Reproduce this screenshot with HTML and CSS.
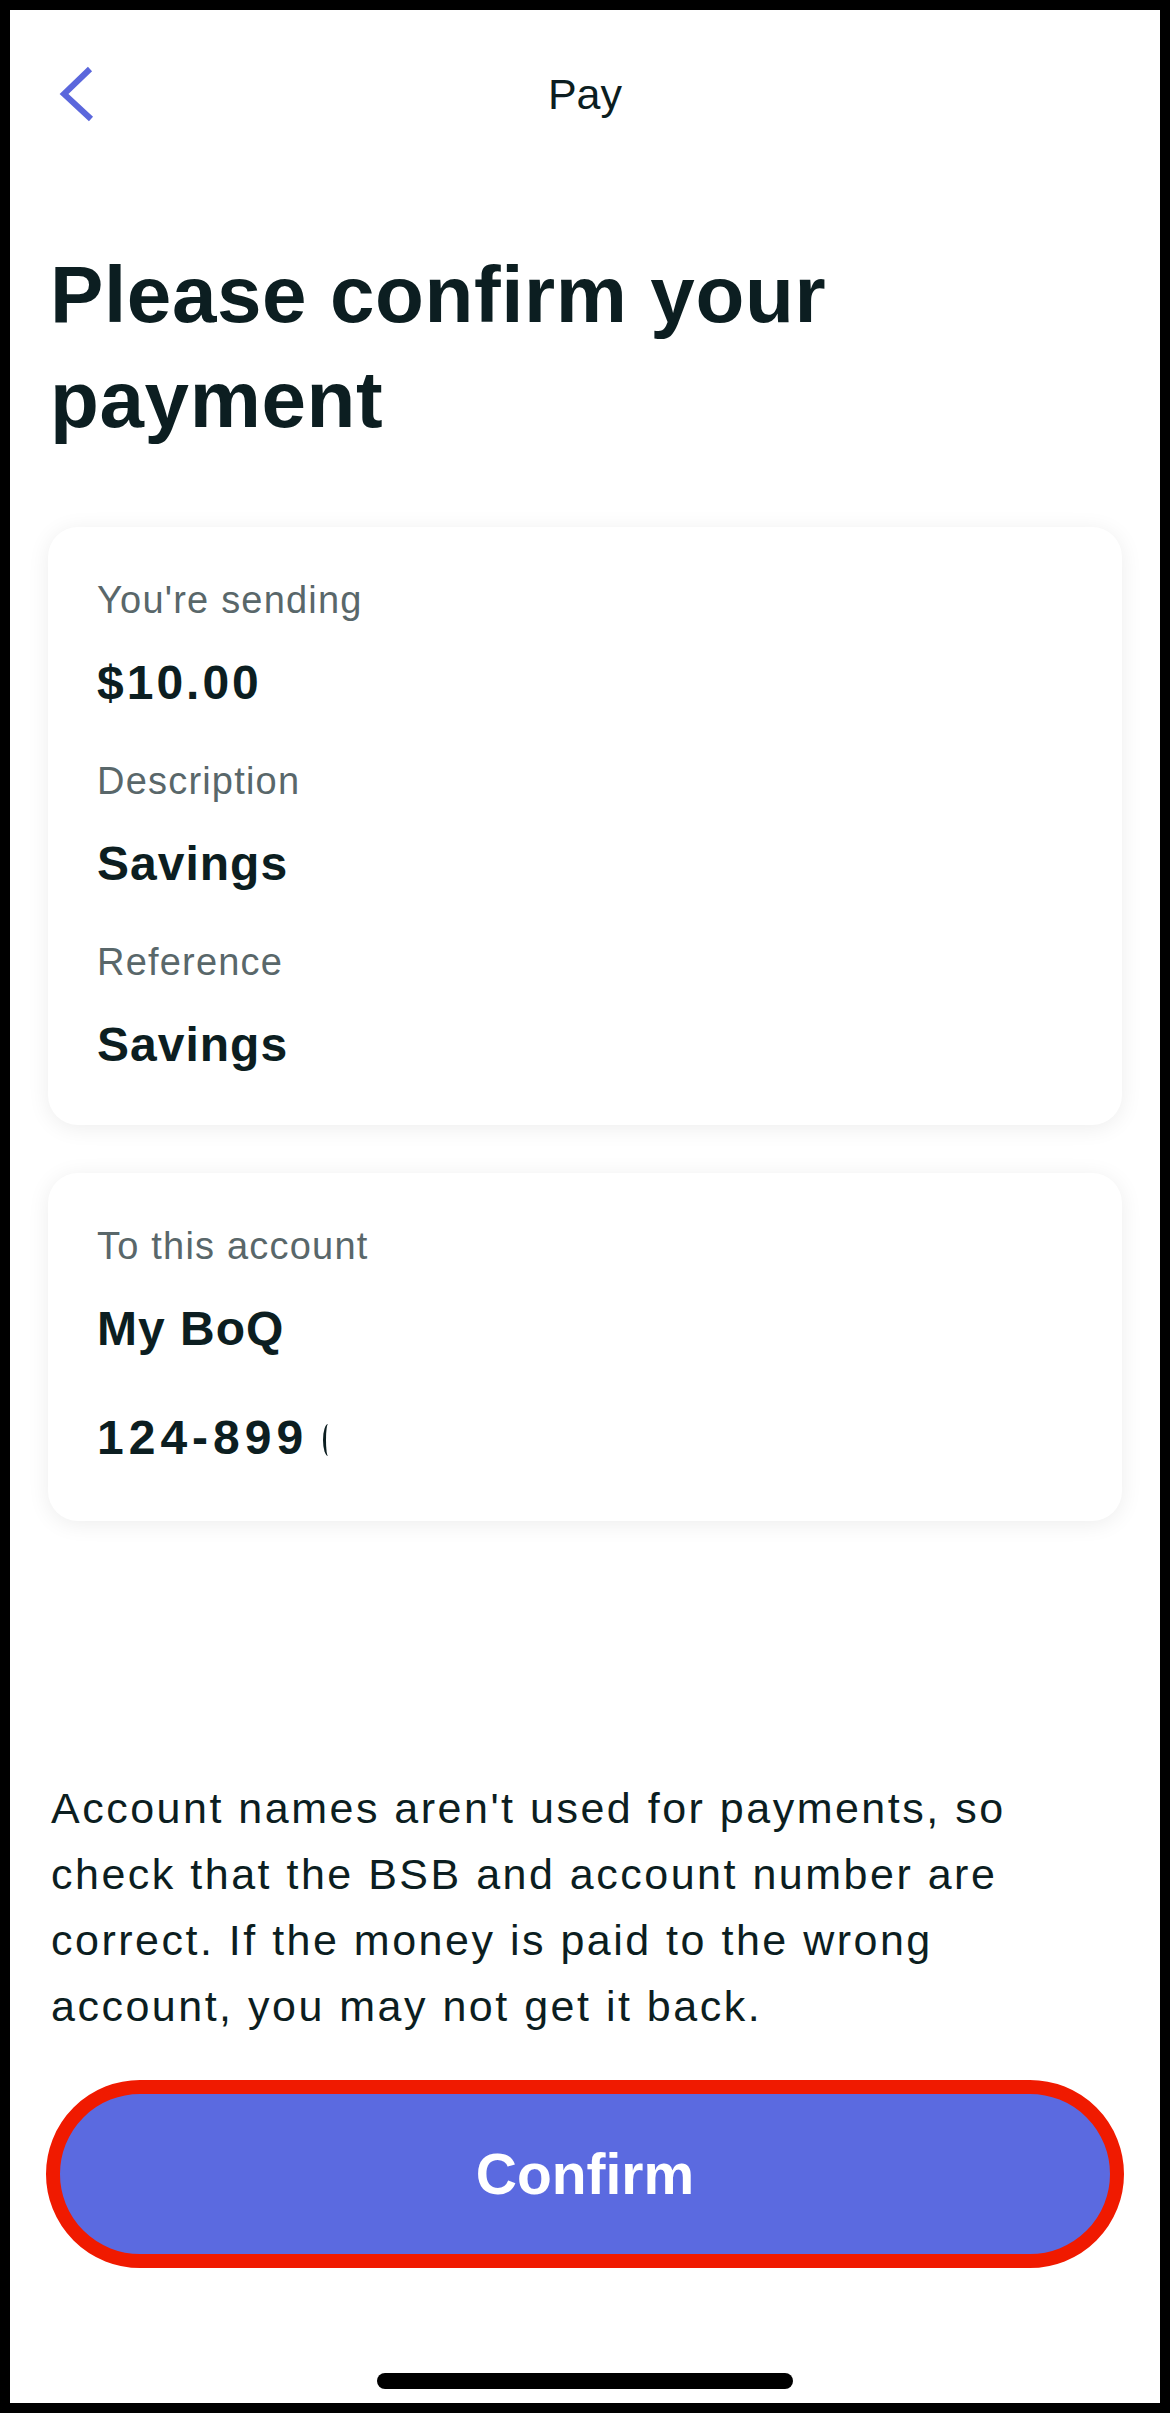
FILE: index.html
```html
<!DOCTYPE html>
<html lang="en">
<head>
<meta charset="utf-8">
<title>Pay</title>
<link rel="stylesheet" href="styles.css">
</head>
<body>
<div class="phone">
  <header class="nav">
    <div class="nav-back">
      <svg class="chevron" width="44" height="60" viewBox="0 0 44 60" aria-hidden="true">
        <polyline points="35,5 9,30 36,55" fill="none" stroke="#5b67dc" stroke-width="6" stroke-linejoin="miter" stroke-linecap="butt"/>
      </svg>
    </div>
    <div class="nav-title">Pay</div>
    <div class="nav-side"></div>
  </header>

  <h1 class="heading">Please confirm your payment</h1>

  <section class="card card-payment">
    <div class="label">You're sending</div>
    <div class="value amount">$10.00</div>
    <div class="label row-gap">Description</div>
    <div class="value">Savings</div>
    <div class="label row-gap">Reference</div>
    <div class="value">Savings</div>
  </section>

  <section class="card card-account">
    <div class="label">To this account</div>
    <div class="value">My BoQ</div>
    <div class="value bsb">124-899<span class="bsb-clip" aria-hidden="true"></span></div>
  </section>

  <p class="disclaimer">Account names aren't used for payments, so check that the BSB and account number are correct. If the money is paid to the wrong account, you may not get it back.</p>

  <button class="confirm" type="button">Confirm</button>

  <div class="home-indicator"></div>
</div>
</body>
</html>
```

FILE: styles.css
```css
* {
  box-sizing: border-box;
}

html, body {
  margin: 0;
  padding: 0;
  background: #ffffff;
}

body {
  font-family: "Liberation Sans", Arial, sans-serif;
  color: #0c1e21;
}

.phone {
  width: 1170px;
  height: 2413px;
  border: 10px solid #000000;
  background: #ffffff;
  display: flex;
  flex-direction: column;
  padding: 0 38px;
}

/* Navigation */
.nav {
  margin: 54px -38px 0;
  height: 60px;
  display: grid;
  grid-template-columns: 1fr auto 1fr;
  align-items: center;
}

.nav-back {
  padding-left: 45px;
  display: flex;
  align-items: center;
}

.chevron {
  display: block;
}

.nav-title {
  font-size: 43px;
  line-height: 60px;
  color: #0c1e21;
}

/* Heading */
.heading {
  margin: 118px 0 0 2px;
  max-width: 900px;
  font-size: 80px;
  line-height: 105px;
  font-weight: 700;
  letter-spacing: 0.6px;
  color: #0c1e21;
}

/* Cards */
.card {
  background: #ffffff;
  border-radius: 30px;
  box-shadow: 0 3px 22px rgba(0, 0, 0, 0.075);
  padding: 51px 49px 52px;
}

.card-payment {
  margin-top: 75px;
}

.card-account {
  margin-top: 48px;
  padding-bottom: 55px;
}

.label {
  font-size: 38px;
  line-height: 44px;
  color: #59676a;
  letter-spacing: 1.2px;
}

.label.row-gap {
  margin-top: 48px;
}

.value {
  margin-top: 33px;
  font-size: 48px;
  line-height: 56px;
  font-weight: 700;
  color: #0c1e21;
  letter-spacing: 1px;
}

.value.amount {
  letter-spacing: 3px;
}

.value.bsb {
  margin-top: 53px;
  letter-spacing: 5px;
}

.bsb-clip {
  display: inline-block;
  width: 10px;
  height: 32px;
  margin-left: 15px;
  border-left: 3px solid #0c1e21;
  border-radius: 50% 0 0 50% / 50% 0 0 50%;
  vertical-align: -2px;
}

/* Disclaimer */
.disclaimer {
  margin: auto 0 0 3px;
  max-width: 1040px;
  font-size: 43px;
  line-height: 66px;
  letter-spacing: 2.5px;
  color: #0c1e21;
}

/* Confirm button */
.confirm {
  margin: 41px -2px 0;
  height: 188px;
  border: 14px solid #f01a00;
  border-radius: 94px;
  background: #5b6ae0;
  color: #ffffff;
  font-family: "Liberation Sans", Arial, sans-serif;
  font-size: 57px;
  font-weight: 700;
  display: flex;
  align-items: center;
  justify-content: center;
  padding: 0;
}

/* Home indicator */
.home-indicator {
  align-self: center;
  width: 416px;
  height: 16px;
  border-radius: 8px;
  background: #000000;
  margin: 105px 0 14px;
}
```
